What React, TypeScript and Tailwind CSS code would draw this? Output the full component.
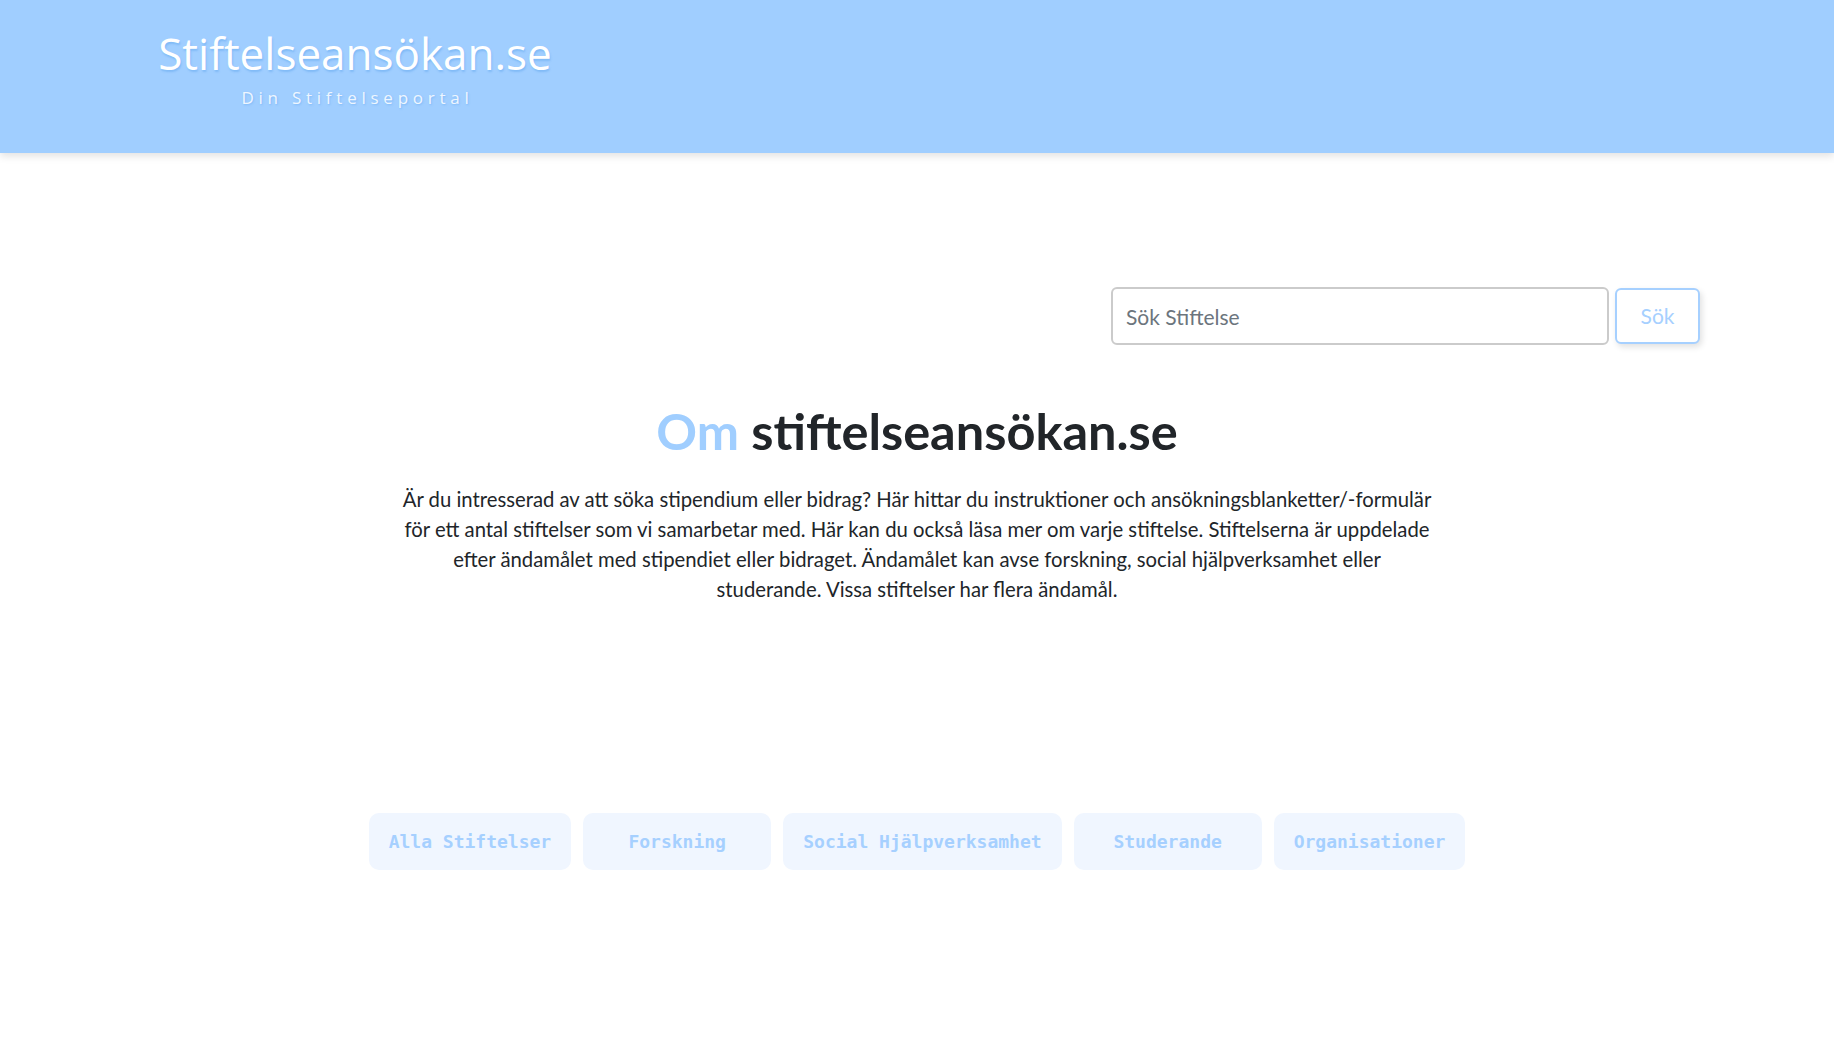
import React from 'react'

const categories = ['Alla Stiftelser', 'Forskning', 'Social Hjälpverksamhet', 'Studerande', 'Organisationer']

export default function App() {
  return (
    <div className="min-h-screen bg-white font-['Lato',sans-serif] text-[#212529]">
      <header className="h-[153px] bg-[#a0ceff] shadow-[0_3px_8px_rgba(0,0,0,0.12)]">
        <div className="box-content flex w-[392px] flex-col items-center pl-[159px] pt-[23px]">
          <h1 className="whitespace-nowrap font-['Open_Sans',sans-serif] text-[44px] leading-[60px] text-white [text-shadow:1px_2px_2px_rgba(70,150,230,0.35)]">
            Stiftelseansökan.se
          </h1>
          <p className="mt-[3px] whitespace-nowrap pl-[5px] font-['Open_Sans',sans-serif] text-[17px] leading-[24px] tracking-[0.28em] text-[#eef6ff] [text-shadow:1px_1px_2px_rgba(70,150,230,0.35)]">
            Din Stiftelseportal
          </p>
        </div>
      </header>

      <div className="flex justify-end gap-[6px] pr-[134px] pt-[134px]">
        <input
          type="text"
          placeholder="Sök Stiftelse"
          className="h-[58px] w-[498px] rounded-[6px] border-2 border-[#cbcbcb] px-[13px] font-['Lato',sans-serif] text-[21px] text-[#495057] outline-none placeholder:text-[#6c757d]"
        />
        <button className="mt-[1px] h-[56px] w-[85px] rounded-[6px] border-2 border-[#a6d0ff] bg-white text-[21px] text-[#a6d0ff] shadow-[2px_3px_6px_rgba(0,0,0,0.12)]">
          Sök
        </button>
      </div>

      <main className="mx-auto flex w-[1060px] flex-col items-center pt-[51px]">
        <h2 className="text-[50.5px] font-bold leading-[70px]">
          <span className="text-[#a0ceff]">Om</span> stiftelseansökan.se
        </h2>
        <p className="mt-[18px] w-[1033px] text-center text-[20.3px] leading-[30px]">
          Är du intresserad av att söka stipendium eller bidrag? Här hittar du instruktioner och ansökningsblanketter/-formulär för ett antal stiftelser som vi samarbetar med. Här kan du också läsa mer om varje stiftelse. Stiftelserna är uppdelade efter ändamålet med stipendiet eller bidraget. Ändamålet kan avse forskning, social hjälpverksamhet eller studerande. Vissa stiftelser har flera ändamål.
        </p>
      </main>

      <nav className="mt-[209px] flex justify-center gap-[12px]">
        {categories.map((c) => (
          <button
            key={c}
            className="h-[57px] min-w-[188px] rounded-[10px] bg-[#f0f6ff] px-[20px] font-['DejaVu_Sans_Mono',monospace] text-[18px] font-bold text-[#a6d0ff]"
          >
            {c}
          </button>
        ))}
      </nav>
    </div>
  )
}
